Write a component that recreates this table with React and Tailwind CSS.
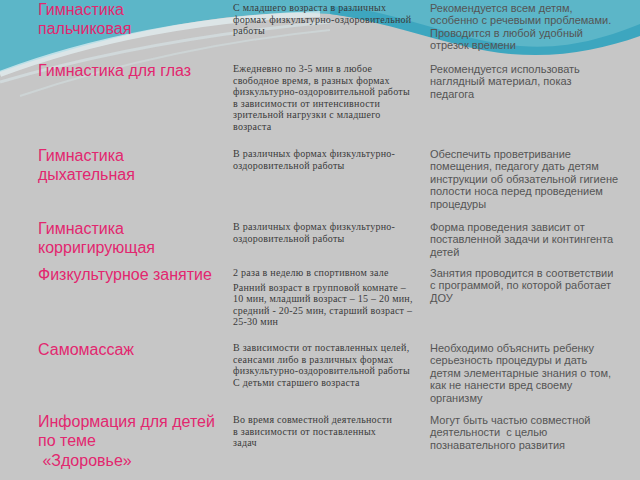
import React from "react";

const rows = [
  {
    h: "h-[61px]",
    c1: ["Гимнастика", "пальчиковая"],
    c2: [["С младшего возраста в различных", "формах физкультурно-оздоровительной", "работы"]],
    c3: ["Рекомендуется всем детям,", "особенно с речевыми проблемами.", "Проводится в любой удобный", "отрезок времени"],
  },
  {
    h: "h-[85px]",
    c1: ["Гимнастика для глаз"],
    c2: [["Ежедневно по 3-5 мин в любое", "свободное время, в разных формах", "физкультурно-оздоровительной работы", "в зависимости от интенсивности", "зрительной нагрузки с младшего", "возраста"]],
    c3: ["Рекомендуется использовать", "наглядный материал, показ", "педагога"],
  },
  {
    h: "h-[73px]",
    c1: ["Гимнастика", "дыхательная"],
    c2: [["В различных формах физкультурно-", "оздоровительной работы"]],
    c3: ["Обеспечить проветривание", "помещения, педагогу дать детям", "инструкции об обязательной гигиене", "полости носа перед проведением", "процедуры"],
  },
  {
    h: "h-[46px]",
    c1: ["Гимнастика", "корригирующая"],
    c2: [["В различных формах физкультурно-", "оздоровительной работы"]],
    c3: ["Форма проведения зависит от", "поставленной задачи и контингента", "детей"],
  },
  {
    h: "h-[75px]",
    c1: ["Физкультурное занятие"],
    c2: [
      ["2 раза в неделю в спортивном зале"],
      ["Ранний возраст в групповой комнате –", "10 мин, младший возраст – 15 – 20 мин,", "средний - 20-25 мин, старший возраст –", "25-30 мин"],
    ],
    c3: ["Занятия проводится в соответствии", "с программой, по которой работает", "ДОУ"],
  },
  {
    h: "h-[72px]",
    c1: ["Самомассаж"],
    c2: [["В зависимости от поставленных целей,", "сеансами либо в различных формах", "физкультурно-оздоровительной работы", "С детьми старшего возраста"]],
    c3: ["Необходимо объяснить ребенку", "серьезность процедуры и дать", "детям элементарные знания о том,", "как не нанести вред своему", "организму"],
  },
  {
    h: "h-[64px]",
    c1: ["Информация для детей", "по теме", "\u00a0«Здоровье»"],
    c2: [["Во время совместной деятельности", "в зависимости от поставленных", "задач"]],
    c3: ["Могут быть частью совместной", "деятельности \u00a0с целью", "познавательного развития"],
  },
];

function Wave() {
  return (
    <svg className="absolute left-0 top-0" width="640" height="120" viewBox="0 0 640 120">
      <path d="M0 0 H640 V28 C610 36 580 48 530 48 C460 47 400 22 330 14 C240 8 120 30 0 72 Z" fill="#5cb6c8" />
      <path d="M330 6 C400 10 450 40 520 46 C570 50 610 36 640 24 L640 36 C600 50 560 58 510 54 C450 48 400 24 330 14 Z" fill="#3da6bf" />
      <path d="M0 74 C90 40 200 18 320 14" stroke="#e6f2f5" strokeOpacity="0.7" strokeWidth="6" fill="none" />
      <path d="M0 82 C110 50 220 32 330 22" stroke="#dcecef" strokeOpacity="0.5" strokeWidth="3" fill="none" />
      <path d="M20 96 C120 62 230 40 330 30" stroke="#d6e8ec" strokeOpacity="0.4" strokeWidth="2" fill="none" />
    </svg>
  );
}

export default function App() {
  return (
    <div className="relative w-[640px] h-[480px] overflow-hidden bg-[#c6c6c6]">
      <Wave />
      <div className="relative flex flex-col pt-[1px]">
        {rows.map((r, i) => (
          <div key={i} className={`grid grid-cols-[233px_197px_210px] ${r.h}`}>
            <div className="pl-[38px] font-['Liberation_Sans',Arial,sans-serif] text-[16px] leading-[18.5px] text-[#e2276f] whitespace-nowrap">
              {r.c1.map((l, j) => (
                <div key={j} className={j === 2 ? "mt-[2px]" : ""}>{l}</div>
              ))}
            </div>
            <div className="flex flex-col gap-[3px] pt-[1px] font-['Liberation_Serif','Times_New_Roman',serif] text-[10px] leading-[11.5px] tracking-[0.25px] text-[#3a3a3a] whitespace-nowrap">
              {r.c2.map((p, j) => (
                <div key={j}>
                  {p.map((l, k) => (
                    <div key={k}>{l}</div>
                  ))}
                </div>
              ))}
            </div>
            <div className="pt-[1px] font-['Liberation_Sans',Arial,sans-serif] text-[11px] leading-[12.4px] text-[#555555] whitespace-nowrap">
              {r.c3.map((l, j) => (
                <div key={j}>{l}</div>
              ))}
            </div>
          </div>
        ))}
      </div>
    </div>
  );
}
